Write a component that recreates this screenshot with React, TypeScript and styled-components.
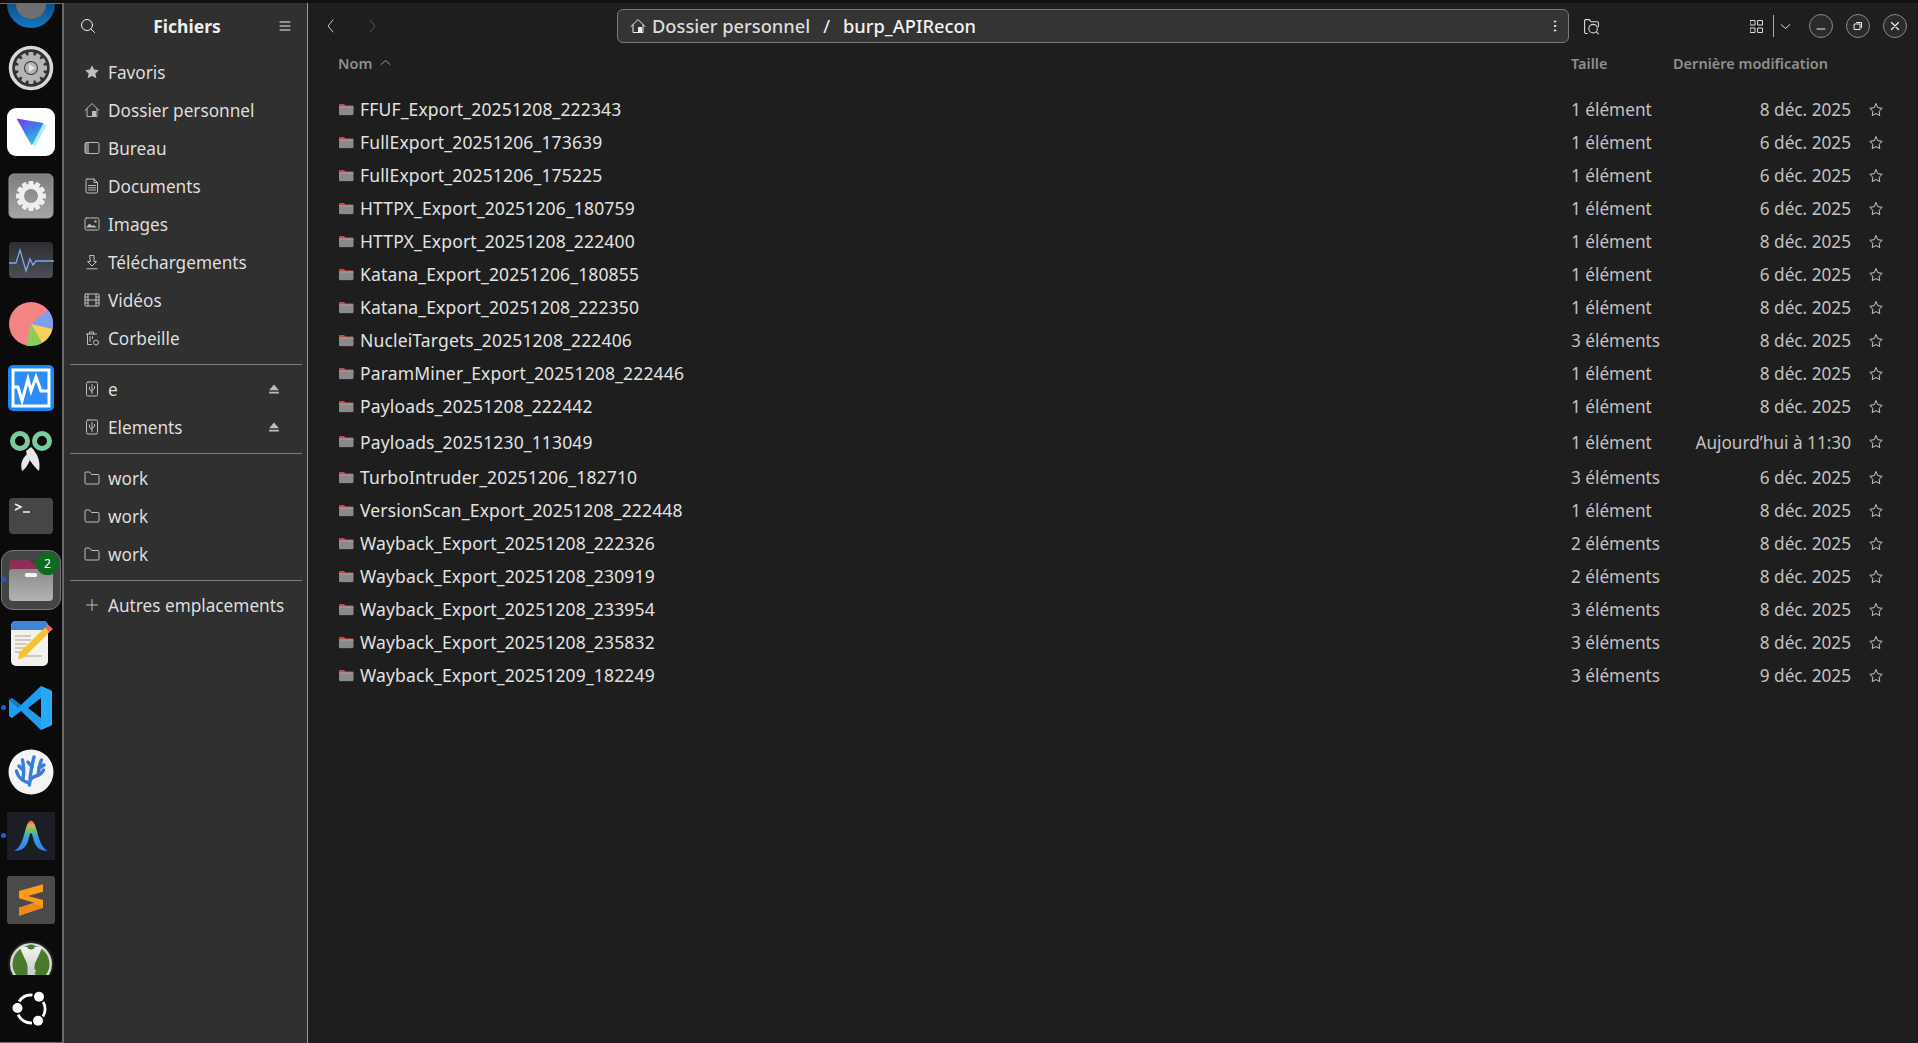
import React from 'react'
import styled, { createGlobalStyle } from 'styled-components'

const Global = createGlobalStyle`
  html, body { margin: 0; padding: 0; height: 100%; background: #111; }
  body { font-family: "Noto Sans", "Open Sans", sans-serif; overflow: hidden; }
  #root { height: 100%; }
`

const files = [
  { name: 'FFUF_Export_20251208_222343', size: '1 élément', date: '8 déc. 2025' },
  { name: 'FullExport_20251206_173639', size: '1 élément', date: '6 déc. 2025' },
  { name: 'FullExport_20251206_175225', size: '1 élément', date: '6 déc. 2025' },
  { name: 'HTTPX_Export_20251206_180759', size: '1 élément', date: '6 déc. 2025' },
  { name: 'HTTPX_Export_20251208_222400', size: '1 élément', date: '8 déc. 2025' },
  { name: 'Katana_Export_20251206_180855', size: '1 élément', date: '6 déc. 2025' },
  { name: 'Katana_Export_20251208_222350', size: '1 élément', date: '8 déc. 2025' },
  { name: 'NucleiTargets_20251208_222406', size: '3 éléments', date: '8 déc. 2025' },
  { name: 'ParamMiner_Export_20251208_222446', size: '1 élément', date: '8 déc. 2025' },
  { name: 'Payloads_20251208_222442', size: '1 élément', date: '8 déc. 2025' },
  { name: 'Payloads_20251230_113049', size: '1 élément', date: 'Aujourd’hui à 11:30', tall: true },
  { name: 'TurboIntruder_20251206_182710', size: '3 éléments', date: '6 déc. 2025' },
  { name: 'VersionScan_Export_20251208_222448', size: '1 élément', date: '8 déc. 2025' },
  { name: 'Wayback_Export_20251208_222326', size: '2 éléments', date: '8 déc. 2025' },
  { name: 'Wayback_Export_20251208_230919', size: '2 éléments', date: '8 déc. 2025' },
  { name: 'Wayback_Export_20251208_233954', size: '3 éléments', date: '8 déc. 2025' },
  { name: 'Wayback_Export_20251208_235832', size: '3 éléments', date: '8 déc. 2025' },
  { name: 'Wayback_Export_20251209_182249', size: '3 éléments', date: '9 déc. 2025' },
]

const Ico = ({ size = 16, children, vb = '0 0 16 16', sw = 1 }: { size?: number; children: React.ReactNode; vb?: string; sw?: number }) => (
  <svg width={size} height={size} viewBox={vb} fill="none" stroke="currentColor" strokeWidth={sw} strokeLinecap="round" strokeLinejoin="round">
    {children}
  </svg>
)

const StarFull = () => <Ico><path fill="currentColor" stroke="none" d="M8 1.2l2.1 4.4 4.8.6-3.5 3.3.9 4.8L8 12l-4.3 2.3.9-4.8L1.100 6.200l4.800-.6z" /></Ico>
const StarLine = () => <Ico><path d="M8 1.800l1.900 3.900 4.300.6-3.100 3 .7 4.300L8 11.600l-3.800 2 .7-4.300-3.100-3 4.300-.6z" /></Ico>
const Home = () => <Ico><path d="M1 8.500L8 1.500l7 7M3 7v7.500h10V7" /><path fill="currentColor" stroke="none" d="M8 9h4v5.500H8z" /></Ico>
const Desk = () => <Ico><rect x="1" y="2.500" width="14" height="11" rx="1.500" /><path fill="currentColor" stroke="none" opacity=".6" d="M1 4a1.500 1.500 0 011.500-1.500H5v11H2.500A1.500 1.500 0 011 12z" /></Ico>
const Doc = () => <Ico><path d="M3 1h7l3.500 3.500V14a1 1 0 01-1 1H3a1 1 0 01-1-1V2a1 1 0 011-1z" /><path d="M10 1v3.500h3.500M4.500 7.500h7M4.500 9.800h7M4.500 12h7" /></Ico>
const Pict = () => <Ico><rect x="1" y="2" width="14" height="12" rx="1.500" /><path fill="currentColor" stroke="none" d="M2 11.500l3.500-4 2.500 2.500 1.500-1 3.500 2.500zM11.500 4.200a1.200 1.200 0 110 2.400 1.200 1.200 0 010-2.400z" /></Ico>
const Down = () => <Ico><path d="M6 1.500h4v6h2.500L8 12 3.500 7.500H6zM3 14.800h10" /></Ico>
const Film = () => <Ico><rect x="1" y="2" width="14" height="12" rx=".5" /><path d="M4 2v12M12 2v12M1 5h3M1 8h3M1 11h3M12 5h3M12 8h3M12 11h3M4 8h8" /></Ico>
const Trash = () => <Ico><path d="M2.500 4h10M5.500 4V2h4v2M3.500 4v10.500h4M6 6.500v5M8.500 6.500v2" /><circle cx="12" cy="12.500" r="2.500" /></Ico>
const Usb = () => <Ico><rect x="2.500" y="1" width="11" height="14" rx="1.500" /><path d="M8 3.500v9M5.500 6v2.500L8 10.500M10.500 5.500v2L8 9" /></Ico>
const Eject = () => <Ico size={12}><path fill="currentColor" stroke="none" d="M8 2l6.500 7.500h-13zM1.500 11.500h13v2.500h-13z" /></Ico>
const FolderLine = () => <Ico><path d="M1 4V3a1 1 0 011-1h3.500l2 2.500H14a1 1 0 011 1V13a1 1 0 01-1 1H2a1 1 0 01-1-1z" /></Ico>
const Plus = () => <Ico><path d="M8 2.500v11M2.500 8h11" /></Ico>
const Search = () => <Ico><circle cx="7" cy="7" r="5.500" /><path d="M11 11l3.500 3.500" /></Ico>

const FileFolder = () => (
  <svg width="16" height="15" viewBox="0 0 16 15">
    <path fill="#3a2a2c" d="M1 3a1 1 0 011-1h4l1.500 1.500H15v9.500a1 1 0 01-1 1H2a1 1 0 01-1-1z" />
    <path fill="#c9474f" d="M1 3a1 1 0 011-1h4l1.500 1.500H15V5H1z" />
    <rect x="1" y="4.500" width="14.500" height="8.500" rx="1" fill="#8a8a8a" />
    <rect x="1" y="4.500" width="14.500" height="1" fill="#a3a3a3" />
  </svg>
)

/* dock logos */
const GearShape = ({ r = 16, teeth = 12, hole = 9, fill = '#f0efec' }: { r?: number; teeth?: number; hole?: number; fill?: string }) => (
  <g>
    {Array.from({ length: teeth }).map((_, i) => (
      <rect key={i} x={-2.5} y={-r - 3} width={5} height={6} rx={1} fill={fill} transform={`rotate(${(360 / teeth) * i})`} />
    ))}
    <circle r={r - hole / 2} fill="none" stroke={fill} strokeWidth={hole} />
  </g>
)

const LogoDome = () => (
  <svg width="48" height="48" viewBox="-24 -24 48 48">
    <defs><linearGradient id="dome" x1="0" y1="0" x2="0" y2="1"><stop offset="0" stopColor="#0c2d4a" /><stop offset="1" stopColor="#1377c2" /></linearGradient></defs>
    <circle r="24" fill="url(#dome)" />
    <circle r="15" fill="#6f6f6f" />
  </svg>
)
const LogoDiscGear = () => (
  <svg width="46" height="46" viewBox="-23 -23 46 46">
    <circle r="20.500" fill="#333" stroke="#d8d8d8" strokeWidth="3.500" />
    <GearShape r={13} teeth={12} hole={6} fill="#b5b5b5" />
    <circle r="6" fill="#b5b5b5" />
    <path d="M-2 -4l6 4-6 4z" fill="#e5e5e5" />
  </svg>
)
const LogoProton = () => (
  <svg width="48" height="48" viewBox="0 0 48 48">
    <defs>
      <linearGradient id="pv" x1="0" y1="0" x2=".6" y2="1"><stop offset="0" stopColor="#7a3ff0" /><stop offset=".55" stopColor="#3f7fe8" /><stop offset="1" stopColor="#35c6d8" /></linearGradient>
    </defs>
    <rect width="48" height="48" rx="9" fill="#fff" />
    <path d="M11 12.500l29 4-12 22z" fill="#a8eef4" />
    <path d="M9.500 10.500l27 4.500-11 21.500a1 1 0 01-1.500 0z" fill="url(#pv)" />
  </svg>
)
const LogoSettings = () => (
  <svg width="46" height="46" viewBox="-23 -23 46 46">
    <defs><linearGradient id="sg" x1="0" y1="0" x2="0" y2="1"><stop offset="0" stopColor="#7d7d7d" /><stop offset="1" stopColor="#a6a6a6" /></linearGradient></defs>
    <rect x="-22" y="-22" width="44" height="44" rx="5" fill="url(#sg)" stroke="#999" />
    <GearShape r={12} teeth={12} hole={5} />
  </svg>
)
const LogoPulse = () => (
  <svg width="46" height="38" viewBox="0 0 46 38">
    <defs><linearGradient id="pg" x1="0" y1="0" x2="0" y2="1"><stop offset="0" stopColor="#2c2e33" /><stop offset="1" stopColor="#4b4e56" /></linearGradient></defs>
    <rect x="1" y="1" width="44" height="36" rx="4" fill="url(#pg)" />
    <path d="M1 22h7l4-13 6 21 4-12 3 6 3-4h18" stroke="#7fa8f0" strokeWidth="1.300" fill="none" />
  </svg>
)
const LogoPie = () => (
  <svg width="46" height="46" viewBox="-23 -23 46 46">
    <circle r="22" fill="#f58585" />
    <path d="M0 0L17 -14A22 22 0 0 1 21.500 5z" fill="#7ba0f0" />
    <path d="M0 0L21.500 5A22 22 0 0 1 11 19z" fill="#f8d258" />
    <path d="M0 0L11 19A22 22 0 0 1 -5 21.500z" fill="#8ccb5e" />
  </svg>
)
const LogoMonitor = () => (
  <svg width="46" height="46" viewBox="0 0 46 46">
    <rect width="46" height="46" rx="5" fill="#1a86f5" />
    <rect x="5" y="5" width="36" height="36" fill="#2d8df8" stroke="#fff" strokeWidth="3" />
    <path d="M5 22h5l4 14 6-22 3 12 5-14 5 14h8" stroke="#fff" strokeWidth="3" fill="none" />
  </svg>
)
const LogoScissors = () => (
  <svg width="44" height="44" viewBox="0 0 44 44">
    <circle cx="11" cy="11" r="7.500" fill="none" stroke="#7bcb9f" strokeWidth="5" />
    <circle cx="33" cy="11" r="7.500" fill="none" stroke="#7bcb9f" strokeWidth="5" />
    <path d="M22 17c6 6 10 14 8 24-6-5-12-14-13-20z" fill="#e8e8e8" />
    <path d="M18 24c-5 5-7 10-5 17 3-2 6-6 8-11z" fill="#e8e8e8" />
  </svg>
)
const LogoTerminal = () => (
  <svg width="46" height="38" viewBox="0 0 46 38">
    <rect x="1" y="1" width="44" height="36" rx="4" fill="#464646" />
    <path d="M7 7l6 3-6 3M15 15h7" stroke="#f2f2f2" strokeWidth="1.500" fill="none" />
  </svg>
)
const LogoFiles = () => (
  <svg width="46" height="44" viewBox="0 0 46 44">
    <defs>
      <linearGradient id="fg" x1="0" y1="0" x2="0" y2="1"><stop offset="0" stopColor="#8a8a8a" /><stop offset="1" stopColor="#b4b4b4" /></linearGradient>
    </defs>
    <path d="M1 6a4 4 0 014-4h16l5 5h15v12H1z" fill="#8e2f55" />
    <rect x="1" y="11" width="44" height="32" rx="4" fill="url(#fg)" />
    <rect x="17" y="15" width="12" height="4" rx="1.500" fill="#f2f2f2" />
  </svg>
)
const LogoNotes = () => (
  <svg width="48" height="48" viewBox="0 0 48 48">
    <rect x="4" y="1" width="37" height="45" rx="5" fill="#f3f2ee" />
    <path d="M4 10V6a5 5 0 015-5h27a5 5 0 015 5v4z" fill="#3f84d8" />
    <path d="M8 16h16M8 20h16M8 24h12M8 28h10M8 32h8M16 36h19" stroke="#cfcabb" strokeWidth="1.800" />
    <path d="M12 33L38 7.500l4.500 4.500L17 37.500l-6 2z" fill="#f4c430" />
    <path d="M38 7.500l3-3 5 4.500-3.500 3z" fill="#e66" />
  </svg>
)
const LogoCode = () => (
  <svg width="46" height="46" viewBox="0 0 46 46">
    <path d="M33 1l11 5v34l-11 5-20-19-9 7-3-2v-16l3-2 9 7zM33 13L20 23l13 10z" fill="#1f9cf0" fillRule="evenodd" />
    <path d="M33 1L13 20l-9-7-3 2 9 8 23-22z" fill="#0c7cc7" />
    <path d="M33 1l11 5v34l-11 5z" fill="#28a9f5" />
  </svg>
)
const LogoCoral = () => (
  <svg width="46" height="46" viewBox="0 0 46 46">
    <circle cx="23" cy="23" r="22.500" fill="#f4f4f4" />
    <g stroke="#3a7fd5" strokeWidth="3.400" fill="none" strokeLinecap="round">
      <path d="M21.500 36C21 31 24 28 28 27c4-1 6-3 7.500-6" />
      <path d="M21.500 34C16 33 10 29 8.500 22" />
      <path d="M15 30c1-6 1-12-.5-19" />
      <path d="M22 29c1-7 2-14 4-21" />
      <path d="M24 18l-4-5" />
      <path d="M30 26c1-5 1-10 3.500-15" />
      <path d="M31 19l5-3" />
      <path d="M15 21l-4-4" />
    </g>
  </svg>
)
const LogoKate = () => (
  <svg width="48" height="48" viewBox="0 0 48 48">
    <defs><linearGradient id="kg" x1="0" y1="0" x2="0" y2="1"><stop offset="0" stopColor="#e8504a" /><stop offset=".15" stopColor="#e8b04a" /><stop offset=".33" stopColor="#6fbf70" /><stop offset=".55" stopColor="#38a0e0" /><stop offset="1" stopColor="#2f7ff0" /></linearGradient></defs>
    <rect width="48" height="48" fill="#1c1e26" />
    <path d="M7 39c7-3 9-13 12-23 1.500-5 3-7.500 5-7.500s3.500 2.500 5 7.500c3 10 5 20 12 23-7 0-12-3-14-10-1.500-5-2-8-3-8s-1.500 3-3 8c-2 7-7 10-14 10z" fill="url(#kg)" />
  </svg>
)
const LogoSublime = () => (
  <svg width="48" height="48" viewBox="0 0 48 48">
    <rect width="48" height="48" rx="3" fill="#4a4a4a" />
    <path d="M12 15l24-6.700v7.400L21 20l15 4v7.700l-24 8v-8l15.300-5-15.300-4.400z" fill="#ff9a1c" />
    <path d="M12 31.700l15.300-5 8.700 5-24 8z" fill="#ec8a14" />
  </svg>
)
const LogoKeepass = () => (
  <svg width="46" height="46" viewBox="-23 -23 46 46">
    <defs><linearGradient id="kp" x1="0" y1="0" x2="0" y2="1"><stop offset="0" stopColor="#f2f2f2" /><stop offset="1" stopColor="#bdbdbd" /></linearGradient></defs>
    <circle r="22" fill="#d8d8d8" stroke="#222" strokeWidth="2" />
    <circle r="18.500" fill="#4b7a2a" />
    <path d="M-11 -17C-8 -7-4-3-3.500 2V20H3.500V14L6 12 3.500 9 5 7 3.500 5V2C4-3 8-7 11-17z" fill="url(#kp)" />
    <ellipse cy="-17" rx="3.500" ry="2.500" fill="#4b7a2a" />
  </svg>
)

const polar = (deg: number, r: number) => {
  const a = (deg * Math.PI) / 180
  return `${(r * Math.cos(a)).toFixed(2)} ${(r * Math.sin(a)).toFixed(2)}`
}
const LogoUbuntu = () => (
  <svg width="38" height="38" viewBox="-19 -19 38 38">
    {[[-30, 32], [86, 156], [212, 276]].map(([from, to]) => (
      <path key={from} d={`M${polar(from, 14)}A14 14 0 0 1 ${polar(to, 14)}`} fill="none" stroke="#fff" strokeWidth="2.800" />
    ))}
    <circle cx="8" cy="-12.300" r="5" fill="#fff" />
    <circle cx="-13.500" cy="-1" r="5" fill="#fff" />
    <circle cx="7" cy="11.700" r="5" fill="#fff" />
  </svg>
)

const dock: { logo: React.ReactNode; dot?: boolean; active?: boolean }[] = [
  { logo: <LogoDome /> },
  { logo: <LogoDiscGear /> },
  { logo: <LogoProton /> },
  { logo: <LogoSettings /> },
  { logo: <LogoPulse /> },
  { logo: <LogoPie /> },
  { logo: <LogoMonitor /> },
  { logo: <LogoScissors /> },
  { logo: <LogoTerminal /> },
  { logo: <LogoFiles />, dot: true, active: true },
  { logo: <LogoNotes /> },
  { logo: <LogoCode />, dot: true },
  { logo: <LogoCoral /> },
  { logo: <LogoKate />, dot: true },
  { logo: <LogoSublime /> },
  { logo: <LogoKeepass /> },
]

const Screen = styled.div`
  height: 100vh;
  display: flex;
  flex-direction: column;
`
const TopStrip = styled.div`
  height: 3px;
  background: #111;
  flex: none;
`
const Desktop = styled.div`
  flex: 1;
  min-height: 0;
  display: flex;
`
const Dock = styled.div`
  width: 62px;
  flex: none;
  background: #0b0b0b;
  border-top: 1px solid #6a6a6a;
  border-right: 2px solid #6a6a6a;
  border-bottom: 1px solid #6a6a6a;
  display: flex;
  flex-direction: column;
  overflow: hidden;
`
const DockList = styled.div`
  height: 971px;
  flex: none;
  overflow: hidden;
  display: flex;
  flex-direction: column;
`
const DockInner = styled.div`
  margin-top: -32px;
  display: flex;
  flex-direction: column;
`
const DockSlot = styled.div<{ $active?: boolean }>`
  height: 64px;
  flex: none;
  display: flex;
  align-items: center;
  justify-content: center;
  position: relative;
  &::before {
    content: "";
    position: absolute;
    inset: 2px 1px;
    border-radius: 12px;
    background: ${p => (p.$active ? '#444' : 'transparent')};
    border: 1px solid ${p => (p.$active ? '#777' : 'transparent')};
  }
  svg { position: relative; }
`
const DockDot = styled.span`
  position: absolute;
  left: 1px;
  top: 29px;
  width: 5px;
  height: 5px;
  border-radius: 50%;
  background: #0a66d8;
`
const DockBadge = styled.span`
  position: absolute;
  left: 36px;
  top: 4px;
  width: 23px;
  height: 23px;
  border-radius: 50%;
  background: #0e6a1e;
  color: #fff;
  font-size: 12px;
  display: flex;
  align-items: center;
  justify-content: center;
`
const DockFooter = styled.div`
  flex: 1;
  display: flex;
  align-items: center;
  justify-content: center;
`
const Sidebar = styled.aside`
  width: 243px;
  flex: none;
  background: #303030;
  border-right: 1px solid #9a9a9a;
  display: flex;
  flex-direction: column;
  color: #e0e0e0;
`
const SideHeader = styled.div`
  height: 46px;
  flex: none;
  display: flex;
  align-items: center;
  justify-content: space-between;
  padding: 0 15px 0 16px;
  color: #f0f0f0;
`
const SideTitle = styled.div`
  font-size: 17.500px;
  font-weight: 700;
  color: #eee;
`
const SideList = styled.div`
  padding: 4px 0 0;
  display: flex;
  flex-direction: column;
`
const SideRow = styled.div`
  height: 38px;
  display: flex;
  align-items: center;
  padding: 0 22px 0 20px;
  gap: 8px;
  font-size: 17.200px;
  color: #dedede;
  svg { color: #bdbdbd; flex: none; }
`
const SideLabel = styled.span`
  flex: 1;
`
const EjectSlot = styled.span`
  display: flex;
  margin-right: 5px;
`
const Sep = styled.div`
  height: 1px;
  background: #7d7d7d;
  margin: 7px 5px 5px 6px;
`
const Main = styled.main`
  flex: 1;
  min-width: 0;
  background: #1e1e1e;
  display: flex;
  flex-direction: column;
`
const Toolbar = styled.header`
  height: 46px;
  flex: none;
  display: flex;
  align-items: center;
  padding: 0 11px 0 15px;
  color: #ddd;
`
const NavBtn = styled.div<{ $dim?: boolean }>`
  width: 41px;
  display: flex;
  color: ${p => (p.$dim ? '#555' : '#ccc')};
`
const PathBar = styled.div`
  margin-left: 212px;
  width: 952px;
  height: 34px;
  box-sizing: border-box;
  background: #343434;
  border: 1px solid #7a7a7a;
  border-radius: 6px;
  display: flex;
  align-items: center;
  padding: 0 6px 0 12px;
  font-size: 18.300px;
  line-height: 30px;
  color: #eee;
`
const PathSeg = styled.span<{ $sep?: boolean; $dim?: boolean }>`
  margin: ${p => (p.$sep ? '0 13px' : '0')};
  padding-bottom: 1px;
  font-weight: ${p => (p.$sep ? 400 : 500)};
  color: ${p => (p.$dim ? '#dcdcdc' : '#f2f2f2')};
  margin-left: ${p => (p.$dim ? '6px' : undefined)};
`
const Grow = styled.div`
  flex: 1;
`
const ToolIcons = styled.div`
  display: flex;
  align-items: center;
  margin-left: 14px;
  flex: 1;
  color: #ddd;
`
const ViewGroup = styled.div`
  display: flex;
  align-items: center;
  margin-right: 5px;
`
const VRule = styled.div`
  width: 1px;
  height: 22px;
  margin: 0 6px 0 10px;
  background: #aaa;
`
const WinBtn = styled.button`
  width: 24px;
  height: 24px;
  margin-left: 13px;
  border-radius: 50%;
  border: 1px solid #8a8a8a;
  background: #2b2b2b;
  color: #eee;
  padding: 0;
  display: flex;
  align-items: center;
  justify-content: center;
`
const ColHead = styled.div`
  height: 27px;
  flex: none;
  display: grid;
  grid-template-columns: 1fr 102px 245px;
  align-items: center;
  padding-left: 30px;
  font-size: 14.500px;
  font-weight: 600;
  color: #8f8f8f;
`
const HeadName = styled.span`
  display: flex;
  align-items: center;
  gap: 8px;
  svg { color: #999; }
`
const Rows = styled.div`
  padding-top: 17px;
  display: flex;
  flex-direction: column;
`
const Row = styled.div<{ $tall?: boolean }>`
  height: ${p => (p.$tall ? 38 : 33)}px;
  flex: none;
  display: grid;
  grid-template-columns: 1fr 85px 195px 67px;
  align-items: center;
  padding-left: 30px;
  font-size: 17.200px;
`
const NameCell = styled.span`
  display: flex;
  align-items: center;
  gap: 6px;
  padding-bottom: 1px;
  font-size: 17.500px;
  letter-spacing: .15px;
  color: #e2e2e2;
  svg { flex: none; }
`
const SizeCell = styled.span`
  color: #c2c2c2;
  white-space: nowrap;
`
const DateCell = styled.span`
  color: #c2c2c2;
  text-align: right;
  white-space: nowrap;
`
const StarCell = styled.span`
  display: flex;
  justify-content: flex-start;
  padding-left: 17px;
  color: #c8c8c8;
`

const sideMain = [
  { icon: <StarFull />, label: 'Favoris' },
  { icon: <Home />, label: 'Dossier personnel' },
  { icon: <Desk />, label: 'Bureau' },
  { icon: <Doc />, label: 'Documents' },
  { icon: <Pict />, label: 'Images' },
  { icon: <Down />, label: 'Téléchargements' },
  { icon: <Film />, label: 'Vidéos' },
  { icon: <Trash />, label: 'Corbeille' },
]

export default function App() {
  return (
    <Screen>
      <Global />
      <TopStrip />
      <Desktop>
        <Dock>
          <DockList>
            <DockInner>
              {dock.map((d, i) => (
                <DockSlot key={i} $active={d.active}>
                  {d.dot && <DockDot />}
                  {d.logo}
                  {d.active && <DockBadge>2</DockBadge>}
                </DockSlot>
              ))}
            </DockInner>
          </DockList>
          <DockFooter><LogoUbuntu /></DockFooter>
        </Dock>
        <Sidebar>
          <SideHeader>
            <Search />
            <SideTitle>Fichiers</SideTitle>
            <Ico size={14} vb="0 0 14 14"><path d="M2 3h10M2 7h10M2 11h10" /></Ico>
          </SideHeader>
          <SideList>
            {sideMain.map(s => (
              <SideRow key={s.label}>{s.icon}<SideLabel>{s.label}</SideLabel></SideRow>
            ))}
            <Sep />
            <SideRow><Usb /><SideLabel>e</SideLabel><EjectSlot><Eject /></EjectSlot></SideRow>
            <SideRow><Usb /><SideLabel>Elements</SideLabel><EjectSlot><Eject /></EjectSlot></SideRow>
            <Sep />
            <SideRow><FolderLine /><SideLabel>work</SideLabel></SideRow>
            <SideRow><FolderLine /><SideLabel>work</SideLabel></SideRow>
            <SideRow><FolderLine /><SideLabel>work</SideLabel></SideRow>
            <Sep />
            <SideRow><Plus /><SideLabel>Autres emplacements</SideLabel></SideRow>
          </SideList>
        </Sidebar>
        <Main>
          <Toolbar>
            <NavBtn><Ico vb="0 0 16 16"><path d="M10 2L5 8l5 6" /></Ico></NavBtn>
            <NavBtn $dim><Ico vb="0 0 16 16"><path d="M6 2l5 6-5 6" /></Ico></NavBtn>
            <PathBar>
              <Home />
              <PathSeg $dim>Dossier personnel</PathSeg>
              <PathSeg $sep>/</PathSeg>
              <PathSeg>burp_APIRecon</PathSeg>
              <Grow />
              <Ico size={14} vb="0 0 14 14"><circle cx="7" cy="2.500" r=".7" fill="currentColor" /><circle cx="7" cy="7" r=".7" fill="currentColor" /><circle cx="7" cy="11.500" r=".7" fill="currentColor" /></Ico>
            </PathBar>
            <ToolIcons>
              <Ico size={17}><path d="M4 14.500H2.500a1 1 0 01-1-1V2.500a1 1 0 011-1h3.500l1.500 2h6a1 1 0 011 1V8" /><circle cx="9.500" cy="10" r="4" /><path d="M12.500 13l2 2" /></Ico>
              <Grow />
              <ViewGroup>
                <Ico size={13} vb="0 0 13 13"><rect x=".5" y=".5" width="4.500" height="4.500" /><rect x="8" y=".5" width="4.500" height="4.500" /><rect x=".5" y="8" width="4.500" height="4.500" /><rect x="8" y="8" width="4.500" height="4.500" /></Ico>
                <VRule />
                <Ico size={11} vb="0 0 11 11"><path d="M1 3.500l4.500 4 4.500-4" /></Ico>
              </ViewGroup>
              <WinBtn><Ico size={10} vb="0 0 10 10"><path d="M1 8h8" /></Ico></WinBtn>
              <WinBtn><Ico size={10} vb="0 0 10 10"><rect x="1.500" y="3" width="5.500" height="5.500" /><path d="M3.500 1.500h5v5" /></Ico></WinBtn>
              <WinBtn><Ico size={10} vb="0 0 10 10" sw={1.300}><path d="M1.500 1.500l7 7M8.500 1.500l-7 7" /></Ico></WinBtn>
            </ToolIcons>
          </Toolbar>
          <ColHead>
            <HeadName>Nom <Ico size={11} vb="0 0 11 11"><path d="M1 7.500l4.500-4 4.500 4" /></Ico></HeadName>
            <span>Taille</span>
            <span>Dernière modification</span>
          </ColHead>
          <Rows>
            {files.map(f => (
              <Row key={f.name} $tall={f.tall}>
                <NameCell><FileFolder />{f.name}</NameCell>
                <SizeCell>{f.size}</SizeCell>
                <DateCell>{f.date}</DateCell>
                <StarCell><StarLine /></StarCell>
              </Row>
            ))}
          </Rows>
        </Main>
      </Desktop>
    </Screen>
  )
}
